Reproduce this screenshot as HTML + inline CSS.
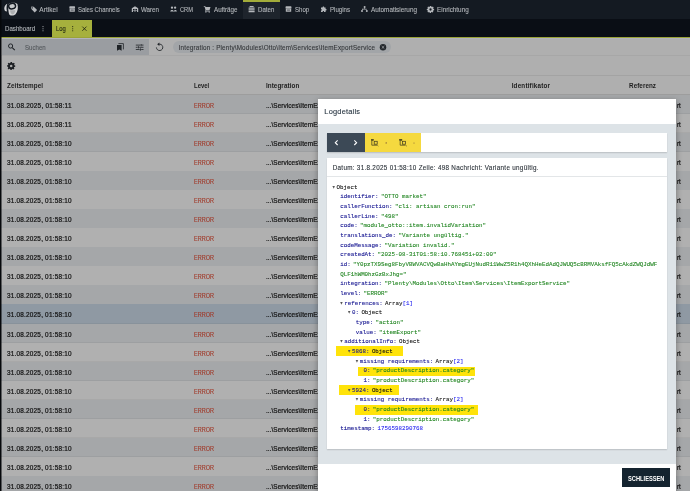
<!DOCTYPE html>
<html lang="de">
<head>
<meta charset="utf-8">
<title>Log</title>
<style>
html,body{margin:0;padding:0;}
body{width:690px;height:491px;overflow:hidden;position:relative;background:#afafaf;font-family:"Liberation Sans",sans-serif;}
.a{position:absolute;}
.lay{left:0;top:0;width:690px;height:491px;will-change:transform;}
.t{position:absolute;white-space:pre;line-height:10px;font-family:"Liberation Sans",sans-serif;-webkit-text-stroke:0.1px currentColor;}
svg{position:absolute;overflow:visible;}
#nav{left:0;top:0;width:690px;height:19px;background:#141a22;}
#navact{left:243px;top:0;width:37px;height:19px;background:#1e242c;}
#navline{left:243px;top:0;width:37px;height:1.8px;background:#a3ac3a;}
#tabs{left:0;top:19px;width:690px;height:18.2px;background:#0a0e15;}
#gline{left:0;top:36.9px;width:690px;height:1.3px;background:#9aa338;}
#lline{left:0;top:38.2px;width:690px;height:0.9px;background:#b3b3bc;}
#logtab{left:51.7px;top:20px;width:40.2px;height:17.4px;background:#a6b03d;}
#search{left:2px;top:39.1px;width:146.7px;height:15.7px;background:#9a9da1;}
#sline{left:0;top:55.4px;width:690px;height:0.8px;background:#a7a7a7;}
#chip{left:173px;top:41px;width:218px;height:12.4px;border-radius:6.2px;background:#a2a5a8;}
#hline1{left:0;top:74.9px;width:690px;height:0.8px;background:#a3a3a3;}
#hline2{left:0;top:94.1px;width:690px;height:0.8px;background:#9d9d9d;}
.row{left:0;width:690px;height:19.06px;}
#lstrip{left:0;top:0;width:2.4px;height:491px;background:linear-gradient(90deg,#06080b 0,#06080b 50%,rgba(6,8,11,0) 100%);}
#modal{left:317.9px;top:98.7px;width:258.4px;height:400px;background:#fff;box-shadow:0 2px 6px rgba(0,0,0,.35);}
#mbody{left:317.9px;top:123.5px;width:357.9px;height:340px;background:#dde3e7;}
#tool{left:327px;top:132.8px;width:340px;height:19.2px;background:#fff;box-shadow:0 0.8px 1.2px rgba(0,0,0,.16);}
#tdark{left:327px;top:132.8px;width:37.9px;height:19.2px;background:#3c4956;}
#tyel{left:364.9px;top:132.8px;width:56px;height:19.2px;background:#f5d93f;}
#panel{left:327px;top:157.9px;width:340px;height:291.2px;background:#fff;box-shadow:0 0.8px 1.2px rgba(0,0,0,.16);}
#psep{left:327px;top:176.2px;width:340px;height:0.6px;background:#e3e6e8;}
#btn{left:622px;top:468.4px;width:48px;height:19px;background:#14232f;}
.hl{background:#ffe30a;}
/* json tree */
#jf{left:332.4px;top:182.75px;-webkit-text-stroke:0.09px currentColor;font-family:"Liberation Mono",monospace;font-size:5.83px;line-height:9.65px;color:#111;white-space:pre;}
#jf .r .r{margin-left:7.75px;}
#jf .k{color:#10108e;padding-right:2.4px;}
#jf .s{color:#1f841f;}
#jf .n{color:#2a2af0;}
#jf .b{color:#2a2af0;}
#jf .g{display:inline-block;width:4.1px;font-family:"DejaVu Sans",sans-serif;font-size:3.1px;color:#555;vertical-align:top;}
</style>
</head>
<body>
<div class="a" id="nav"></div>
<div class="a" id="navact"></div>
<div class="a" id="navline"></div>
<div class="a" id="tabs"></div>
<div class="a" id="logtab"></div>
<div class="a" id="gline"></div>
<div class="a" id="lline"></div>
<div class="a" id="search"></div>
<div class="a" id="sline"></div>
<div class="a" id="chip"></div>
<div class="a" id="hline1"></div>
<div class="a row" style="top:94.80px;background:#a5a7a9"></div>
<div class="a" style="left:0;width:690px;height:0.7px;top:113.36px;background:rgba(0,0,0,0.045)"></div>
<div class="a row" style="top:113.86px;background:#b0b0b0"></div>
<div class="a" style="left:0;width:690px;height:0.7px;top:132.42px;background:rgba(0,0,0,0.045)"></div>
<div class="a row" style="top:132.92px;background:#a5a7a9"></div>
<div class="a" style="left:0;width:690px;height:0.7px;top:151.48px;background:rgba(0,0,0,0.045)"></div>
<div class="a row" style="top:151.98px;background:#b0b0b0"></div>
<div class="a" style="left:0;width:690px;height:0.7px;top:170.54px;background:rgba(0,0,0,0.045)"></div>
<div class="a row" style="top:171.04px;background:#a5a7a9"></div>
<div class="a" style="left:0;width:690px;height:0.7px;top:189.60px;background:rgba(0,0,0,0.045)"></div>
<div class="a row" style="top:190.10px;background:#b0b0b0"></div>
<div class="a" style="left:0;width:690px;height:0.7px;top:208.66px;background:rgba(0,0,0,0.045)"></div>
<div class="a row" style="top:209.16px;background:#a5a7a9"></div>
<div class="a" style="left:0;width:690px;height:0.7px;top:227.72px;background:rgba(0,0,0,0.045)"></div>
<div class="a row" style="top:228.22px;background:#b0b0b0"></div>
<div class="a" style="left:0;width:690px;height:0.7px;top:246.78px;background:rgba(0,0,0,0.045)"></div>
<div class="a row" style="top:247.28px;background:#a5a7a9"></div>
<div class="a" style="left:0;width:690px;height:0.7px;top:265.84px;background:rgba(0,0,0,0.045)"></div>
<div class="a row" style="top:266.34px;background:#b0b0b0"></div>
<div class="a" style="left:0;width:690px;height:0.7px;top:284.90px;background:rgba(0,0,0,0.045)"></div>
<div class="a row" style="top:285.40px;background:#a5a7a9"></div>
<div class="a" style="left:0;width:690px;height:0.7px;top:303.96px;background:rgba(0,0,0,0.045)"></div>
<div class="a row" style="top:304.46px;background:#8f99a3"></div>
<div class="a" style="left:0;width:690px;height:0.7px;top:323.02px;background:rgba(0,0,0,0.045)"></div>
<div class="a row" style="top:323.52px;background:#a5a7a9"></div>
<div class="a" style="left:0;width:690px;height:0.7px;top:342.08px;background:rgba(0,0,0,0.045)"></div>
<div class="a row" style="top:342.58px;background:#b0b0b0"></div>
<div class="a" style="left:0;width:690px;height:0.7px;top:361.14px;background:rgba(0,0,0,0.045)"></div>
<div class="a row" style="top:361.64px;background:#a5a7a9"></div>
<div class="a" style="left:0;width:690px;height:0.7px;top:380.20px;background:rgba(0,0,0,0.045)"></div>
<div class="a row" style="top:380.70px;background:#b0b0b0"></div>
<div class="a" style="left:0;width:690px;height:0.7px;top:399.26px;background:rgba(0,0,0,0.045)"></div>
<div class="a row" style="top:399.76px;background:#a5a7a9"></div>
<div class="a" style="left:0;width:690px;height:0.7px;top:418.32px;background:rgba(0,0,0,0.045)"></div>
<div class="a row" style="top:418.82px;background:#b0b0b0"></div>
<div class="a" style="left:0;width:690px;height:0.7px;top:437.38px;background:rgba(0,0,0,0.045)"></div>
<div class="a row" style="top:437.88px;background:#a5a7a9"></div>
<div class="a" style="left:0;width:690px;height:0.7px;top:456.44px;background:rgba(0,0,0,0.045)"></div>
<div class="a row" style="top:456.94px;background:#b0b0b0"></div>
<div class="a" style="left:0;width:690px;height:0.7px;top:475.50px;background:rgba(0,0,0,0.045)"></div>
<div class="a row" style="top:476.00px;background:#a5a7a9"></div>
<div class="a" style="left:0;width:690px;height:0.7px;top:494.56px;background:rgba(0,0,0,0.045)"></div>
<div class="a" id="hline2"></div>
<svg style="left:0;top:0" width="690" height="491" viewBox="0 0 690 491">
<!-- logo -->
<g>
 <path d="M8.6 4 C10.5 2.6 15.6 2.4 17.4 4 C18.4 7.4 17.8 11.6 15.6 14.2 C13.8 16 10.8 16 9.2 14.4 C8.2 11.4 8 7 8.6 4 Z" fill="#d3d4d6"/>
 <path d="M7.3 3.7 C4.8 4.8 3.4 8 5 10.9 L7 11.4 C6.3 9 6.4 6 7.3 3.7 Z" fill="#d3d4d6"/>
 <path d="M10 10.2 H15.4 C15.2 12.2 14.2 13.8 12.6 14.6 C11 14 10.2 12.4 10 10.2 Z" fill="#adafb1"/>
 <ellipse cx="12.1" cy="6.1" rx="3.45" ry="2.75" transform="rotate(-10 12.1 6.1)" fill="#c6c8ca" stroke="#141a22" stroke-width="1.5"/>
</g>
<g fill="#b4b7bb" stroke="none">
 <!-- Artikel: tag -->
 <g transform="translate(33.7,9) rotate(135)"><path d="M-1.7 -3.1 H1.7 V1.6 L0 3.4 L-1.7 1.6 Z"/><circle cx="0" cy="1.6" r="0.55" fill="#141a22"/></g>
 <!-- Sales Channels: store -->
 <path d="M69.6 6.2 H74.8 L75.2 8.2 H69.2 Z M69.6 8.6 H74.8 V11.8 H69.6 Z"/>
 <rect x="70.7" y="9.5" width="3" height="1.2" fill="#5d6269"/>
 <!-- Waren -->
 <path d="M131.8 8.2 L135 6.2 L138.2 8.2 V12 H131.8 Z"/>
 <path d="M133 9 H134.6 V10.2 H133 Z M135.4 9 H137 V10.2 H135.4 Z M133 10.8 H134.6 V12 H133 Z M135.4 10.8 H137 V12 H135.4 Z" fill="#141a22"/>
 <!-- CRM -->
 <circle cx="172" cy="7.7" r="1.15"/><circle cx="175.1" cy="7.7" r="1.15"/>
 <path d="M170.2 11.6 C170.2 9.4 173.8 9.4 173.8 11.6 Z M173.6 11.6 C174 9.6 176.8 9.2 176.9 11.6 Z"/>
 <!-- Auftraege: cart -->
 <path d="M203.8 6.2 H205.3 L205.7 7.1 H210.5 L209.5 10.2 H206 L205.8 10.8 H209.8 V11.4 H205 L205.5 9.9 L204.7 6.9 H203.8 Z"/>
 <circle cx="205.9" cy="12" r="0.65"/><circle cx="209.2" cy="12" r="0.65"/>
 <!-- Daten -->
 <path d="M249.6 6 H253.6 V7 H249.6 Z M248.6 7.4 H254.6 V8.8 H248.6 Z M248.6 9.2 H254.6 V10.6 H248.6 Z M248.6 11 H254.6 V12.2 H248.6 Z"/>
 <!-- Shop -->
 <path d="M285.8 6.2 H291.2 L291.6 8.2 H285.4 Z M285.8 8.6 H291.2 V11.8 H285.8 Z"/>
 <rect x="286.9" y="9.5" width="3.2" height="1.2" fill="#5d6269"/>
 <!-- Plugins: puzzle -->
 <path d="M321 7.6 H322.6 C322.2 6 324.6 6 324.2 7.6 H325.6 V9 C327 8.6 327 10.8 325.6 10.4 V12 H324 C324.4 10.8 322.4 10.8 322.8 12 H321 V10.4 C322.2 10.8 322.2 8.8 321 9.2 Z"/>
 <!-- Automatisierung -->
 <circle cx="364.6" cy="7" r="1"/><circle cx="362" cy="11" r="1"/><circle cx="366.8" cy="11" r="1"/>
 <path d="M364.3 7 H364.9 V8.8 H366.5 V10 H365.9 V9.4 H362.6 V10 H362 V8.8 H364.3 Z"/>
 <!-- Einrichtung: gear -->
 <g transform="translate(430.6,9.2)"><path d="M-0.6 -3.3 H0.6 L0.8 -2.4 L1.5 -2.1 L2.3 -2.6 L3.1 -1.7 L2.5 -1 L2.7 -0.4 L3.5 -0.1 V1 L2.6 1.2 L2.3 1.9 L2.8 2.6 L1.9 3.4 L1.2 2.9 L0.5 3.1 L0.3 3.9 H-0.8 L-1 3 L-1.7 2.8 L-2.4 3.3 L-3.2 2.4 L-2.7 1.7 L-3 1 L-3.8 0.8 V-0.3 L-2.9 -0.5 L-2.7 -1.2 L-3.2 -1.9 L-2.3 -2.7 L-1.6 -2.2 L-0.9 -2.5 Z"/><circle cx="-0.1" cy="0.3" r="1.15" fill="#141a22"/></g>
 <!-- Dashboard dots -->
 <circle cx="43" cy="26.6" r="0.55"/><circle cx="43" cy="28.7" r="0.55"/><circle cx="43" cy="30.8" r="0.55"/>
</g>
<!-- Log tab icons -->
<g fill="#1b2010"><circle cx="72.7" cy="26.6" r="0.55"/><circle cx="72.7" cy="28.7" r="0.55"/><circle cx="72.7" cy="30.8" r="0.55"/></g>
<path d="M82.3 26.6 L86.5 30.8 M86.5 26.6 L82.3 30.8" stroke="#1b2010" stroke-width="0.8" fill="none"/>
<!-- search -->
<g fill="none" stroke="#1f2327" stroke-width="0.95">
 <circle cx="10.6" cy="46" r="2.1"/><path d="M12.2 47.7 L14.8 50.2" stroke-width="1.1"/>
</g>
<!-- bookmarks -->
<path d="M117 45 H121.6 V50.8 L119.3 49.6 L117 50.8 Z" fill="#1f2327"/>
<path d="M118.4 43.6 H123.4 V49.4" fill="none" stroke="#1f2327" stroke-width="0.8"/>
<!-- tune -->
<g fill="none" stroke="#1f2327" stroke-width="0.8">
 <path d="M135.8 45.1 H140.4 M142 45.1 H143.5 M135.8 47.3 H137.6 M139.2 47.3 H143.5 M135.8 49.5 H139.6 M141.2 49.5 H143.5"/>
 <path d="M141.2 44 V46.2 M138.4 46.2 V48.4 M140.4 48.4 V50.6" stroke-width="0.9"/>
</g>
<!-- refresh -->
<path d="M158.6 44.3 A3.2 3.2 0 1 1 156.4 47.4" fill="none" stroke="#1f2327" stroke-width="0.85"/>
<path d="M159.4 42.6 V46 L157.2 44.3 Z" fill="#1f2327"/>
<!-- chip close -->
<circle cx="383" cy="47.3" r="3.25" fill="#23272b"/>
<path d="M381.7 46 L384.3 48.6 M384.3 46 L381.7 48.6" stroke="#a2a5a8" stroke-width="0.8" fill="none"/>
<!-- gear -->
<g transform="translate(11.3,65.7) scale(1.12)" fill="#1d2024"><path d="M-0.6 -3.3 H0.6 L0.8 -2.4 L1.5 -2.1 L2.3 -2.6 L3.1 -1.7 L2.5 -1 L2.7 -0.4 L3.5 -0.1 V1 L2.6 1.2 L2.3 1.9 L2.8 2.6 L1.9 3.4 L1.2 2.9 L0.5 3.1 L0.3 3.9 H-0.8 L-1 3 L-1.7 2.8 L-2.4 3.3 L-3.2 2.4 L-2.7 1.7 L-3 1 L-3.8 0.8 V-0.3 L-2.9 -0.5 L-2.7 -1.2 L-3.2 -1.9 L-2.3 -2.7 L-1.6 -2.2 L-0.9 -2.5 Z"/><circle cx="-0.1" cy="0.3" r="1.15" fill="#adadad"/></g>
</svg>

<div class="a lay"><span class="t" style="left:39.30px;top:5.30px;font-size:6.5px;font-weight:400;color:#b4b7bb;letter-spacing:0.056px;-webkit-text-stroke:0.1px currentColor;">Artikel</span>
<span class="t" style="left:78.30px;top:5.30px;font-size:6.5px;font-weight:400;color:#b4b7bb;transform:scaleX(0.9159);transform-origin:0 0;-webkit-text-stroke:0.1px currentColor;">Sales Channels</span>
<span class="t" style="left:141.00px;top:5.30px;font-size:6.5px;font-weight:400;color:#b4b7bb;transform:scaleX(0.9521);transform-origin:0 0;-webkit-text-stroke:0.1px currentColor;">Waren</span>
<span class="t" style="left:179.70px;top:5.30px;font-size:6.5px;font-weight:400;color:#b4b7bb;transform:scaleX(0.8776);transform-origin:0 0;-webkit-text-stroke:0.1px currentColor;">CRM</span>
<span class="t" style="left:213.50px;top:5.30px;font-size:6.5px;font-weight:400;color:#b4b7bb;transform:scaleX(0.9561);transform-origin:0 0;-webkit-text-stroke:0.1px currentColor;">Aufträge</span>
<span class="t" style="left:258.00px;top:5.30px;font-size:6.5px;font-weight:400;color:#b4b7bb;transform:scaleX(0.9390);transform-origin:0 0;-webkit-text-stroke:0.1px currentColor;">Daten</span>
<span class="t" style="left:294.80px;top:5.30px;font-size:6.5px;font-weight:400;color:#b4b7bb;transform:scaleX(0.9350);transform-origin:0 0;-webkit-text-stroke:0.1px currentColor;">Shop</span>
<span class="t" style="left:330.00px;top:5.30px;font-size:6.5px;font-weight:400;color:#b4b7bb;transform:scaleX(0.9377);transform-origin:0 0;-webkit-text-stroke:0.1px currentColor;">Plugins</span>
<span class="t" style="left:370.70px;top:5.30px;font-size:6.5px;font-weight:400;color:#b4b7bb;transform:scaleX(0.9790);transform-origin:0 0;-webkit-text-stroke:0.1px currentColor;">Automatisierung</span>
<span class="t" style="left:437.30px;top:5.30px;font-size:6.5px;font-weight:400;color:#b4b7bb;transform:scaleX(0.9744);transform-origin:0 0;-webkit-text-stroke:0.1px currentColor;">Einrichtung</span>
<span class="t" style="left:5.20px;top:23.70px;font-size:6.5px;font-weight:400;color:#b4b7bb;transform:scaleX(0.9462);transform-origin:0 0;-webkit-text-stroke:0.1px currentColor;">Dashboard</span>
<span class="t" style="left:55.60px;top:23.70px;font-size:6.5px;font-weight:400;color:#1b2010;transform:scaleX(0.9024);transform-origin:0 0;-webkit-text-stroke:0.1px currentColor;">Log</span>
<span class="t" style="left:25.00px;top:43.40px;font-size:6.5px;font-weight:400;color:#54585c;transform:scaleX(0.9389);transform-origin:0 0;-webkit-text-stroke:0.1px currentColor;">Suchen</span>
<span class="t" style="left:178.60px;top:43.40px;font-size:6.3px;font-weight:400;color:#34373a;letter-spacing:0.181px;-webkit-text-stroke:0.1px currentColor;">Integration : Plenty\Modules\Otto\Item\Services\ItemExportService</span>
<span class="t" style="left:7.00px;top:80.70px;font-size:6.3px;font-weight:700;color:#1d1d1d;letter-spacing:0.100px;-webkit-text-stroke:0px currentColor;">Zeitstempel</span>
<span class="t" style="left:194.10px;top:80.70px;font-size:6.3px;font-weight:700;color:#1d1d1d;transform:scaleX(0.9435);transform-origin:0 0;-webkit-text-stroke:0px currentColor;">Level</span>
<span class="t" style="left:265.90px;top:80.70px;font-size:6.3px;font-weight:700;color:#1d1d1d;letter-spacing:0.085px;-webkit-text-stroke:0px currentColor;">Integration</span>
<span class="t" style="left:511.70px;top:80.70px;font-size:6.3px;font-weight:700;color:#1d1d1d;letter-spacing:0.188px;-webkit-text-stroke:0px currentColor;">Identifikator</span>
<span class="t" style="left:629.10px;top:80.70px;font-size:6.3px;font-weight:700;color:#1d1d1d;letter-spacing:0.042px;-webkit-text-stroke:0px currentColor;">Referenz</span>
<span class="t" style="left:7.00px;top:100.80px;font-size:6.4px;font-weight:400;color:#151515;letter-spacing:0.240px;-webkit-text-stroke:0.22px currentColor;">31.08.2025, 01:58:11</span>
<span class="t" style="left:194.10px;top:100.80px;font-size:6.3px;font-weight:400;color:#a03a2a;transform:scaleX(0.8791);transform-origin:0 0;-webkit-text-stroke:0.12px currentColor;">ERROR</span>
<span class="t" style="left:265.90px;top:100.80px;font-size:6.4px;font-weight:400;color:#151515;letter-spacing:0.084px;-webkit-text-stroke:0.22px currentColor;">...\Services\ItemExportService</span>
<span class="t" style="left:677.20px;top:100.80px;font-size:6.4px;font-weight:400;color:#151515;transform:scaleX(0.9728);transform-origin:0 0;-webkit-text-stroke:0.22px currentColor;">rt</span>
<span class="t" style="left:7.00px;top:119.86px;font-size:6.4px;font-weight:400;color:#151515;letter-spacing:0.240px;-webkit-text-stroke:0.22px currentColor;">31.08.2025, 01:58:11</span>
<span class="t" style="left:194.10px;top:119.86px;font-size:6.3px;font-weight:400;color:#a03a2a;transform:scaleX(0.8791);transform-origin:0 0;-webkit-text-stroke:0.12px currentColor;">ERROR</span>
<span class="t" style="left:265.90px;top:119.86px;font-size:6.4px;font-weight:400;color:#151515;letter-spacing:0.084px;-webkit-text-stroke:0.22px currentColor;">...\Services\ItemExportService</span>
<span class="t" style="left:677.20px;top:119.86px;font-size:6.4px;font-weight:400;color:#151515;transform:scaleX(0.9728);transform-origin:0 0;-webkit-text-stroke:0.22px currentColor;">rt</span>
<span class="t" style="left:7.00px;top:138.92px;font-size:6.4px;font-weight:400;color:#151515;letter-spacing:0.215px;-webkit-text-stroke:0.22px currentColor;">31.08.2025, 01:58:10</span>
<span class="t" style="left:194.10px;top:138.92px;font-size:6.3px;font-weight:400;color:#a03a2a;transform:scaleX(0.8791);transform-origin:0 0;-webkit-text-stroke:0.12px currentColor;">ERROR</span>
<span class="t" style="left:265.90px;top:138.92px;font-size:6.4px;font-weight:400;color:#151515;letter-spacing:0.084px;-webkit-text-stroke:0.22px currentColor;">...\Services\ItemExportService</span>
<span class="t" style="left:677.20px;top:138.92px;font-size:6.4px;font-weight:400;color:#151515;transform:scaleX(0.9728);transform-origin:0 0;-webkit-text-stroke:0.22px currentColor;">rt</span>
<span class="t" style="left:7.00px;top:157.98px;font-size:6.4px;font-weight:400;color:#151515;letter-spacing:0.215px;-webkit-text-stroke:0.22px currentColor;">31.08.2025, 01:58:10</span>
<span class="t" style="left:194.10px;top:157.98px;font-size:6.3px;font-weight:400;color:#a03a2a;transform:scaleX(0.8791);transform-origin:0 0;-webkit-text-stroke:0.12px currentColor;">ERROR</span>
<span class="t" style="left:265.90px;top:157.98px;font-size:6.4px;font-weight:400;color:#151515;letter-spacing:0.084px;-webkit-text-stroke:0.22px currentColor;">...\Services\ItemExportService</span>
<span class="t" style="left:677.20px;top:157.98px;font-size:6.4px;font-weight:400;color:#151515;transform:scaleX(0.9728);transform-origin:0 0;-webkit-text-stroke:0.22px currentColor;">rt</span>
<span class="t" style="left:7.00px;top:177.04px;font-size:6.4px;font-weight:400;color:#151515;letter-spacing:0.215px;-webkit-text-stroke:0.22px currentColor;">31.08.2025, 01:58:10</span>
<span class="t" style="left:194.10px;top:177.04px;font-size:6.3px;font-weight:400;color:#a03a2a;transform:scaleX(0.8791);transform-origin:0 0;-webkit-text-stroke:0.12px currentColor;">ERROR</span>
<span class="t" style="left:265.90px;top:177.04px;font-size:6.4px;font-weight:400;color:#151515;letter-spacing:0.084px;-webkit-text-stroke:0.22px currentColor;">...\Services\ItemExportService</span>
<span class="t" style="left:677.20px;top:177.04px;font-size:6.4px;font-weight:400;color:#151515;transform:scaleX(0.9728);transform-origin:0 0;-webkit-text-stroke:0.22px currentColor;">rt</span>
<span class="t" style="left:7.00px;top:196.10px;font-size:6.4px;font-weight:400;color:#151515;letter-spacing:0.215px;-webkit-text-stroke:0.22px currentColor;">31.08.2025, 01:58:10</span>
<span class="t" style="left:194.10px;top:196.10px;font-size:6.3px;font-weight:400;color:#a03a2a;transform:scaleX(0.8791);transform-origin:0 0;-webkit-text-stroke:0.12px currentColor;">ERROR</span>
<span class="t" style="left:265.90px;top:196.10px;font-size:6.4px;font-weight:400;color:#151515;letter-spacing:0.084px;-webkit-text-stroke:0.22px currentColor;">...\Services\ItemExportService</span>
<span class="t" style="left:677.20px;top:196.10px;font-size:6.4px;font-weight:400;color:#151515;transform:scaleX(0.9728);transform-origin:0 0;-webkit-text-stroke:0.22px currentColor;">rt</span>
<span class="t" style="left:7.00px;top:215.16px;font-size:6.4px;font-weight:400;color:#151515;letter-spacing:0.215px;-webkit-text-stroke:0.22px currentColor;">31.08.2025, 01:58:10</span>
<span class="t" style="left:194.10px;top:215.16px;font-size:6.3px;font-weight:400;color:#a03a2a;transform:scaleX(0.8791);transform-origin:0 0;-webkit-text-stroke:0.12px currentColor;">ERROR</span>
<span class="t" style="left:265.90px;top:215.16px;font-size:6.4px;font-weight:400;color:#151515;letter-spacing:0.084px;-webkit-text-stroke:0.22px currentColor;">...\Services\ItemExportService</span>
<span class="t" style="left:677.20px;top:215.16px;font-size:6.4px;font-weight:400;color:#151515;transform:scaleX(0.9728);transform-origin:0 0;-webkit-text-stroke:0.22px currentColor;">rt</span>
<span class="t" style="left:7.00px;top:234.22px;font-size:6.4px;font-weight:400;color:#151515;letter-spacing:0.215px;-webkit-text-stroke:0.22px currentColor;">31.08.2025, 01:58:10</span>
<span class="t" style="left:194.10px;top:234.22px;font-size:6.3px;font-weight:400;color:#a03a2a;transform:scaleX(0.8791);transform-origin:0 0;-webkit-text-stroke:0.12px currentColor;">ERROR</span>
<span class="t" style="left:265.90px;top:234.22px;font-size:6.4px;font-weight:400;color:#151515;letter-spacing:0.084px;-webkit-text-stroke:0.22px currentColor;">...\Services\ItemExportService</span>
<span class="t" style="left:677.20px;top:234.22px;font-size:6.4px;font-weight:400;color:#151515;transform:scaleX(0.9728);transform-origin:0 0;-webkit-text-stroke:0.22px currentColor;">rt</span>
<span class="t" style="left:7.00px;top:253.28px;font-size:6.4px;font-weight:400;color:#151515;letter-spacing:0.215px;-webkit-text-stroke:0.22px currentColor;">31.08.2025, 01:58:10</span>
<span class="t" style="left:194.10px;top:253.28px;font-size:6.3px;font-weight:400;color:#a03a2a;transform:scaleX(0.8791);transform-origin:0 0;-webkit-text-stroke:0.12px currentColor;">ERROR</span>
<span class="t" style="left:265.90px;top:253.28px;font-size:6.4px;font-weight:400;color:#151515;letter-spacing:0.084px;-webkit-text-stroke:0.22px currentColor;">...\Services\ItemExportService</span>
<span class="t" style="left:677.20px;top:253.28px;font-size:6.4px;font-weight:400;color:#151515;transform:scaleX(0.9728);transform-origin:0 0;-webkit-text-stroke:0.22px currentColor;">rt</span>
<span class="t" style="left:7.00px;top:272.34px;font-size:6.4px;font-weight:400;color:#151515;letter-spacing:0.215px;-webkit-text-stroke:0.22px currentColor;">31.08.2025, 01:58:10</span>
<span class="t" style="left:194.10px;top:272.34px;font-size:6.3px;font-weight:400;color:#a03a2a;transform:scaleX(0.8791);transform-origin:0 0;-webkit-text-stroke:0.12px currentColor;">ERROR</span>
<span class="t" style="left:265.90px;top:272.34px;font-size:6.4px;font-weight:400;color:#151515;letter-spacing:0.084px;-webkit-text-stroke:0.22px currentColor;">...\Services\ItemExportService</span>
<span class="t" style="left:677.20px;top:272.34px;font-size:6.4px;font-weight:400;color:#151515;transform:scaleX(0.9728);transform-origin:0 0;-webkit-text-stroke:0.22px currentColor;">rt</span>
<span class="t" style="left:7.00px;top:291.40px;font-size:6.4px;font-weight:400;color:#151515;letter-spacing:0.215px;-webkit-text-stroke:0.22px currentColor;">31.08.2025, 01:58:10</span>
<span class="t" style="left:194.10px;top:291.40px;font-size:6.3px;font-weight:400;color:#a03a2a;transform:scaleX(0.8791);transform-origin:0 0;-webkit-text-stroke:0.12px currentColor;">ERROR</span>
<span class="t" style="left:265.90px;top:291.40px;font-size:6.4px;font-weight:400;color:#151515;letter-spacing:0.084px;-webkit-text-stroke:0.22px currentColor;">...\Services\ItemExportService</span>
<span class="t" style="left:677.20px;top:291.40px;font-size:6.4px;font-weight:400;color:#151515;transform:scaleX(0.9728);transform-origin:0 0;-webkit-text-stroke:0.22px currentColor;">rt</span>
<span class="t" style="left:7.00px;top:310.46px;font-size:6.4px;font-weight:400;color:#151515;letter-spacing:0.215px;-webkit-text-stroke:0.22px currentColor;">31.08.2025, 01:58:10</span>
<span class="t" style="left:194.10px;top:310.46px;font-size:6.3px;font-weight:400;color:#a03a2a;transform:scaleX(0.8791);transform-origin:0 0;-webkit-text-stroke:0.12px currentColor;">ERROR</span>
<span class="t" style="left:265.90px;top:310.46px;font-size:6.4px;font-weight:400;color:#151515;letter-spacing:0.084px;-webkit-text-stroke:0.22px currentColor;">...\Services\ItemExportService</span>
<span class="t" style="left:677.20px;top:310.46px;font-size:6.4px;font-weight:400;color:#151515;transform:scaleX(0.9728);transform-origin:0 0;-webkit-text-stroke:0.22px currentColor;">rt</span>
<span class="t" style="left:7.00px;top:329.52px;font-size:6.4px;font-weight:400;color:#151515;letter-spacing:0.215px;-webkit-text-stroke:0.22px currentColor;">31.08.2025, 01:58:10</span>
<span class="t" style="left:194.10px;top:329.52px;font-size:6.3px;font-weight:400;color:#a03a2a;transform:scaleX(0.8791);transform-origin:0 0;-webkit-text-stroke:0.12px currentColor;">ERROR</span>
<span class="t" style="left:265.90px;top:329.52px;font-size:6.4px;font-weight:400;color:#151515;letter-spacing:0.084px;-webkit-text-stroke:0.22px currentColor;">...\Services\ItemExportService</span>
<span class="t" style="left:677.20px;top:329.52px;font-size:6.4px;font-weight:400;color:#151515;transform:scaleX(0.9728);transform-origin:0 0;-webkit-text-stroke:0.22px currentColor;">rt</span>
<span class="t" style="left:7.00px;top:348.58px;font-size:6.4px;font-weight:400;color:#151515;letter-spacing:0.215px;-webkit-text-stroke:0.22px currentColor;">31.08.2025, 01:58:10</span>
<span class="t" style="left:194.10px;top:348.58px;font-size:6.3px;font-weight:400;color:#a03a2a;transform:scaleX(0.8791);transform-origin:0 0;-webkit-text-stroke:0.12px currentColor;">ERROR</span>
<span class="t" style="left:265.90px;top:348.58px;font-size:6.4px;font-weight:400;color:#151515;letter-spacing:0.084px;-webkit-text-stroke:0.22px currentColor;">...\Services\ItemExportService</span>
<span class="t" style="left:677.20px;top:348.58px;font-size:6.4px;font-weight:400;color:#151515;transform:scaleX(0.9728);transform-origin:0 0;-webkit-text-stroke:0.22px currentColor;">rt</span>
<span class="t" style="left:7.00px;top:367.64px;font-size:6.4px;font-weight:400;color:#151515;letter-spacing:0.215px;-webkit-text-stroke:0.22px currentColor;">31.08.2025, 01:58:10</span>
<span class="t" style="left:194.10px;top:367.64px;font-size:6.3px;font-weight:400;color:#a03a2a;transform:scaleX(0.8791);transform-origin:0 0;-webkit-text-stroke:0.12px currentColor;">ERROR</span>
<span class="t" style="left:265.90px;top:367.64px;font-size:6.4px;font-weight:400;color:#151515;letter-spacing:0.084px;-webkit-text-stroke:0.22px currentColor;">...\Services\ItemExportService</span>
<span class="t" style="left:677.20px;top:367.64px;font-size:6.4px;font-weight:400;color:#151515;transform:scaleX(0.9728);transform-origin:0 0;-webkit-text-stroke:0.22px currentColor;">rt</span>
<span class="t" style="left:7.00px;top:386.70px;font-size:6.4px;font-weight:400;color:#151515;letter-spacing:0.215px;-webkit-text-stroke:0.22px currentColor;">31.08.2025, 01:58:10</span>
<span class="t" style="left:194.10px;top:386.70px;font-size:6.3px;font-weight:400;color:#a03a2a;transform:scaleX(0.8791);transform-origin:0 0;-webkit-text-stroke:0.12px currentColor;">ERROR</span>
<span class="t" style="left:265.90px;top:386.70px;font-size:6.4px;font-weight:400;color:#151515;letter-spacing:0.084px;-webkit-text-stroke:0.22px currentColor;">...\Services\ItemExportService</span>
<span class="t" style="left:677.20px;top:386.70px;font-size:6.4px;font-weight:400;color:#151515;transform:scaleX(0.9728);transform-origin:0 0;-webkit-text-stroke:0.22px currentColor;">rt</span>
<span class="t" style="left:7.00px;top:405.76px;font-size:6.4px;font-weight:400;color:#151515;letter-spacing:0.215px;-webkit-text-stroke:0.22px currentColor;">31.08.2025, 01:58:10</span>
<span class="t" style="left:194.10px;top:405.76px;font-size:6.3px;font-weight:400;color:#a03a2a;transform:scaleX(0.8791);transform-origin:0 0;-webkit-text-stroke:0.12px currentColor;">ERROR</span>
<span class="t" style="left:265.90px;top:405.76px;font-size:6.4px;font-weight:400;color:#151515;letter-spacing:0.084px;-webkit-text-stroke:0.22px currentColor;">...\Services\ItemExportService</span>
<span class="t" style="left:677.20px;top:405.76px;font-size:6.4px;font-weight:400;color:#151515;transform:scaleX(0.9728);transform-origin:0 0;-webkit-text-stroke:0.22px currentColor;">rt</span>
<span class="t" style="left:7.00px;top:424.82px;font-size:6.4px;font-weight:400;color:#151515;letter-spacing:0.215px;-webkit-text-stroke:0.22px currentColor;">31.08.2025, 01:58:10</span>
<span class="t" style="left:194.10px;top:424.82px;font-size:6.3px;font-weight:400;color:#a03a2a;transform:scaleX(0.8791);transform-origin:0 0;-webkit-text-stroke:0.12px currentColor;">ERROR</span>
<span class="t" style="left:265.90px;top:424.82px;font-size:6.4px;font-weight:400;color:#151515;letter-spacing:0.084px;-webkit-text-stroke:0.22px currentColor;">...\Services\ItemExportService</span>
<span class="t" style="left:677.20px;top:424.82px;font-size:6.4px;font-weight:400;color:#151515;transform:scaleX(0.9728);transform-origin:0 0;-webkit-text-stroke:0.22px currentColor;">rt</span>
<span class="t" style="left:7.00px;top:443.88px;font-size:6.4px;font-weight:400;color:#151515;letter-spacing:0.215px;-webkit-text-stroke:0.22px currentColor;">31.08.2025, 01:58:10</span>
<span class="t" style="left:194.10px;top:443.88px;font-size:6.3px;font-weight:400;color:#a03a2a;transform:scaleX(0.8791);transform-origin:0 0;-webkit-text-stroke:0.12px currentColor;">ERROR</span>
<span class="t" style="left:265.90px;top:443.88px;font-size:6.4px;font-weight:400;color:#151515;letter-spacing:0.084px;-webkit-text-stroke:0.22px currentColor;">...\Services\ItemExportService</span>
<span class="t" style="left:677.20px;top:443.88px;font-size:6.4px;font-weight:400;color:#151515;transform:scaleX(0.9728);transform-origin:0 0;-webkit-text-stroke:0.22px currentColor;">rt</span>
<span class="t" style="left:7.00px;top:462.94px;font-size:6.4px;font-weight:400;color:#151515;letter-spacing:0.215px;-webkit-text-stroke:0.22px currentColor;">31.08.2025, 01:58:10</span>
<span class="t" style="left:194.10px;top:462.94px;font-size:6.3px;font-weight:400;color:#a03a2a;transform:scaleX(0.8791);transform-origin:0 0;-webkit-text-stroke:0.12px currentColor;">ERROR</span>
<span class="t" style="left:265.90px;top:462.94px;font-size:6.4px;font-weight:400;color:#151515;letter-spacing:0.084px;-webkit-text-stroke:0.22px currentColor;">...\Services\ItemExportService</span>
<span class="t" style="left:677.20px;top:462.94px;font-size:6.4px;font-weight:400;color:#151515;transform:scaleX(0.9728);transform-origin:0 0;-webkit-text-stroke:0.22px currentColor;">rt</span>
<span class="t" style="left:7.00px;top:482.00px;font-size:6.4px;font-weight:400;color:#151515;letter-spacing:0.215px;-webkit-text-stroke:0.22px currentColor;">31.08.2025, 01:58:10</span>
<span class="t" style="left:194.10px;top:482.00px;font-size:6.3px;font-weight:400;color:#a03a2a;transform:scaleX(0.8791);transform-origin:0 0;-webkit-text-stroke:0.12px currentColor;">ERROR</span>
<span class="t" style="left:265.90px;top:482.00px;font-size:6.4px;font-weight:400;color:#151515;letter-spacing:0.084px;-webkit-text-stroke:0.22px currentColor;">...\Services\ItemExportService</span>
<span class="t" style="left:677.20px;top:482.00px;font-size:6.4px;font-weight:400;color:#151515;transform:scaleX(0.9728);transform-origin:0 0;-webkit-text-stroke:0.22px currentColor;">rt</span></div>
<div class="a" id="lstrip"></div>
<div class="a" id="modal" style="width:357.9px"></div>
<div class="a" id="mbody"></div>
<div class="a" id="tool"></div>
<div class="a" id="tdark"></div>
<div class="a" id="tyel"></div>
<div class="a" id="panel"></div>
<div class="a" id="psep"></div>
<div class="a" id="btn"></div>
<div class="a hl" style="left:335.6px;top:346.4px;width:67.2px;height:9.2px"></div>
<div class="a hl" style="left:358.4px;top:366.8px;width:116.4px;height:9px"></div>
<div class="a hl" style="left:338.8px;top:385.4px;width:60px;height:9.5px"></div>
<div class="a hl" style="left:354.8px;top:405.2px;width:123.2px;height:9.4px"></div>
<svg style="left:327px;top:132.8px" width="94" height="19.2" viewBox="0 0 94 19.2">
 <path d="M10.6 7.4 L8.3 9.7 L10.6 12" fill="none" stroke="#fff" stroke-width="1.1"/>
 <path d="M27.3 7.4 L29.6 9.7 L27.3 12" fill="none" stroke="#fff" stroke-width="1.1"/>
 <g fill="none" stroke="#454020" stroke-width="0.75">
  <rect x="44.2" y="6.2" width="2.4" height="1.4" fill="#454020" stroke-width="0.4"/>
  <path d="M44.8 7.6 V12.2 H50.2 M50.5 12.4 L51.3 13.1"/>
  <rect x="47.2" y="8.3" width="3" height="2.9"/>
 </g>
 <g transform="translate(28.4,0)" fill="none" stroke="#454020" stroke-width="0.75">
  <rect x="44.2" y="6.2" width="2.4" height="1.4" fill="#454020" stroke-width="0.4"/>
  <path d="M44.8 7.6 V12.2 H50.2 M50.5 12.4 L51.3 13.1"/>
  <rect x="47.2" y="8.3" width="3" height="2.9"/>
 </g>
 <circle cx="59.2" cy="9.9" r="0.7" fill="#7a5535"/>
 <circle cx="87" cy="9.9" r="0.5" fill="#7a5535"/>
</svg>
<div class="a lay"><div class="a" id="jf"><div class="r"><span class="g">▼</span>Object<div class="r"><span class="k">identifier:</span><span class="s">"OTTO market"</span></div><div class="r"><span class="k">callerFunction:</span><span class="s">"cli: artisan cron:run"</span></div><div class="r"><span class="k">callerLine:</span><span class="s">"498"</span></div><div class="r"><span class="k">code:</span><span class="s">"module_otto::item.invalidVariation"</span></div><div class="r"><span class="k">translations_de:</span><span class="s">"Variante ungültig."</span></div><div class="r"><span class="k">codeMessage:</span><span class="s">"Variation invalid."</span></div><div class="r"><span class="k">createdAt:</span><span class="s">"2025-08-31T01:58:10.768451+02:00"</span></div><div class="r"><span class="k">id:</span><span class="s">"Y0pzTX9Seg8FbyVBWVACVQwBaHhAYmgEUjNudR11WwZ5R1h4QXhHeEdAdQJWUQ5cBRMVAksfFQ5cAkdZWQJdWF
QLF1hWM0hzGzBxJhg="</span></div><div class="r"><span class="k">integration:</span><span class="s">"Plenty\Modules\Otto\Item\Services\ItemExportService"</span></div><div class="r"><span class="k">level:</span><span class="s">"ERROR"</span></div><div class="r"><span class="g">▼</span><span class="k">references:</span>Array<span class="b">[1]</span><div class="r"><span class="g">▼</span><span class="k">0:</span>Object<div class="r"><span class="k">type:</span><span class="s">"action"</span></div><div class="r"><span class="k">value:</span><span class="s">"itemExport"</span></div></div></div><div class="r"><span class="g">▼</span><span class="k">additionalInfo:</span>Object<div class="r"><span class="g">▼</span><span class="k">5868:</span>Object<div class="r"><span class="g">▼</span><span class="k">missing requirements:</span>Array<span class="b">[2]</span><div class="r"><span class="k">0:</span><span class="s">"productDescription.category"</span></div><div class="r"><span class="k">1:</span><span class="s">"productDescription.category"</span></div></div></div><div class="r"><span class="g">▼</span><span class="k">5924:</span>Object<div class="r"><span class="g">▼</span><span class="k">missing requirements:</span>Array<span class="b">[2]</span><div class="r"><span class="k">0:</span><span class="s">"productDescription.category"</span></div><div class="r"><span class="k">1:</span><span class="s">"productDescription.category"</span></div></div></div></div><div class="r"><span class="k">timestamp:</span><span class="n">1756598290768</span></div></div></div>
<span class="t" style="left:324.30px;top:106.60px;font-size:7.4px;font-weight:400;color:#1f2d3a;letter-spacing:0.222px;-webkit-text-stroke:0.1px currentColor;">Logdetails</span>
<span class="t" style="left:332.70px;top:162.60px;font-size:6.3px;font-weight:400;color:#2a3138;letter-spacing:0.303px;-webkit-text-stroke:0.1px currentColor;">Datum: 31.8.2025 01:58:10 Zeile: 498 Nachricht: Variante ungültig.</span>
<span class="t" style="left:627.70px;top:474.00px;font-size:6.6px;font-weight:700;color:#ffffff;transform:scaleX(0.8661);transform-origin:0 0;-webkit-text-stroke:0px currentColor;">SCHLIESSEN</span></div>
</body>
</html>
